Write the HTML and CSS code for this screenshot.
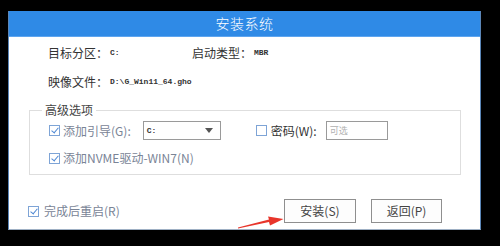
FILE: index.html
```html
<!DOCTYPE html>
<html lang="zh-CN">
<head>
<meta charset="utf-8">
<title>安装系统</title>
<link rel="stylesheet" href="styles.css">
</head>
<body>
<div class="dialog">
  <div class="title">安装系统</div>
  <div class="content">
    <div class="info">
      <span class="label">目标分区：</span><span class="mono v1">C:</span>
      <span class="label">启动类型：</span><span class="mono">MBR</span>
      <span class="label">映像文件：</span><span class="mono v-wide">D:\G_Win11_64.gho</span>
    </div>
    <div class="group">
      <span class="legend">高级选项</span>
      <div class="grow row-a">
        <label class="check-item dim"><span class="cb checked"></span>添加引导(G):</label>
        <div class="select"><span class="mono">C:</span><span class="tri"></span></div>
        <label class="check-item dark pw"><span class="cb"></span>密码(W):</label>
        <div class="input">可选</div>
      </div>
      <div class="grow row-b">
        <label class="check-item dim"><span class="cb checked"></span>添加NVME驱动-WIN7(N)</label>
      </div>
    </div>
    <div class="footer">
      <label class="check-item dim"><span class="cb checked"></span>完成后重启(R)</label>
      <div class="buttons">
        <button class="btn">安装(S)</button>
        <button class="btn">返回(P)</button>
      </div>
    </div>
  </div>
</div>
<svg class="arrow" width="60" height="24" viewBox="230 210 60 24">
  <polygon points="238,228.5 269,222 270,225.5 283.5,219 268,216.5 269,219.5 238,227.5" fill="#e8352b"/>
</svg>
</body>
</html>
```
FILE: styles.css
```css
html, body {
  margin: 0;
  padding: 0;
}
body {
  background: #000;
  width: 500px;
  height: 246px;
  overflow: hidden;
  position: relative;
  font-family: "Noto Sans CJK SC", "Noto Sans", sans-serif;
  color: #333;
}
.dialog {
  margin: 11px 0 0 8px;
  width: 473px;
  height: 219px;
  background: #fff;
  box-sizing: border-box;
  border-left: 1px solid #5b86b8;
  border-right: 1px solid #5b86b8;
  border-bottom: 1px solid #9fb0c4;
  display: flex;
  flex-direction: column;
}
.title {
  height: 25px;
  line-height: 25px;
  background: #2f8ae6;
  border-bottom: 1px solid #5ea5ef;
  color: #fff;
  font-size: 14px;
  font-weight: 300;
  text-align: center;
  letter-spacing: 0.5px;
}
.content {
  padding: 9px 0 0 20px;
  display: flex;
  flex-direction: column;
}
.info {
  margin-left: 19px;
  display: grid;
  grid-template-columns: 62px 82px 62px 1fr;
  row-gap: 15px;
  font-size: 12px;
  line-height: 14px;
}
.label {
  color: #333;
}
.mono {
  font-family: "Liberation Mono", monospace;
  font-size: 8px;
  font-weight: bold;
  color: #333;
}
.v-wide {
  grid-column: 2 / span 3;
}
.group {
  margin-top: 21px;
  width: 432px;
  height: 65px;
  box-sizing: border-box;
  border: 1px solid #dedede;
  display: flex;
  flex-direction: column;
}
.legend {
  align-self: flex-start;
  margin: -8px 0 0 12px;
  padding: 0 3px 0 3px;
  background: #fff;
  font-size: 12px;
  line-height: 14px;
  color: #444;
}
.grow {
  display: flex;
  align-items: center;
  padding-left: 19px;
}
.row-a {
  margin-top: 4px;
  height: 19px;
}
.row-b {
  margin-top: 11px;
  height: 14px;
}
.check-item {
  display: flex;
  align-items: center;
  font-size: 12px;
  line-height: 14px;
  white-space: nowrap;
}
.dim {
  color: #7a8496;
}
.dark {
  color: #333;
}
.cb {
  width: 11px;
  height: 11px;
  box-sizing: border-box;
  border: 1px solid #7ea4d6;
  margin-right: 3px;
  position: relative;
  background: #fff;
}
.cb.checked::after {
  content: "";
  position: absolute;
  left: 3px;
  top: 0px;
  width: 3px;
  height: 6px;
  border-right: 1.5px solid #4e88d4;
  border-bottom: 1.5px solid #4e88d4;
  transform: rotate(40deg);
}
.select {
  margin-left: 12px;
  width: 78px;
  height: 19px;
  box-sizing: border-box;
  border: 1px solid #9a9a9a;
  display: flex;
  align-items: center;
  justify-content: space-between;
  padding: 0 7px 0 3px;
}
.tri {
  width: 0;
  height: 0;
  border-left: 4.5px solid transparent;
  border-right: 4.5px solid transparent;
  border-top: 5px solid #555;
}
.pw {
  margin-left: 35px;
}
.pw .cb {
  margin-right: 4px;
}
.input {
  margin-left: 9px;
  width: 62px;
  height: 19px;
  box-sizing: border-box;
  border: 1px solid #9a9a9a;
  font-size: 9px;
  line-height: 17px;
  color: #b0b0b0;
  padding-left: 3px;
}
.footer {
  margin-top: 24px;
  margin-left: -1px;
  display: flex;
  align-items: center;
  height: 24px;
}
.footer .check-item .cb {
  margin-right: 5px;
}
.buttons {
  margin-left: auto;
  margin-right: 38px;
  display: flex;
  gap: 15px;
}
.btn {
  width: 72px;
  height: 24px;
  box-sizing: border-box;
  border: 1px solid #8f8f8f;
  background: #fdfdfd;
  font-family: "Noto Sans CJK SC", "Noto Sans", sans-serif;
  font-size: 12px;
  color: #444;
  padding: 0;
  line-height: 22px;
}
.btn + .btn {
  width: 71px;
}
.arrow {
  position: absolute;
  left: 230px;
  top: 210px;
}
```
